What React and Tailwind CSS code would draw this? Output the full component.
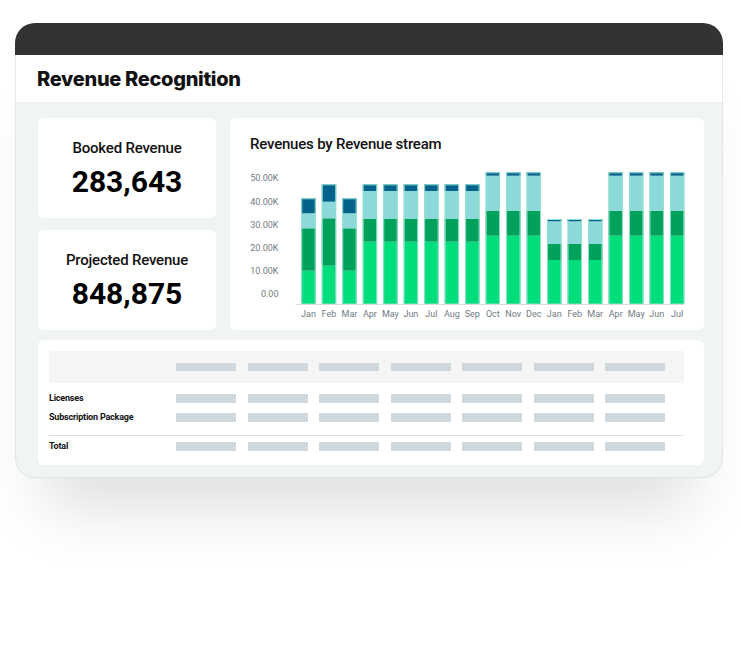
import React from 'react'

const months = ['Jan', 'Feb', 'Mar', 'Apr', 'May', 'Jun', 'Jul', 'Aug', 'Sep', 'Oct', 'Nov', 'Dec', 'Jan', 'Feb', 'Mar', 'Apr', 'May', 'Jun', 'Jul']

// heights from the baseline: bright green, dark green, teal, dark blue
const shapes = {
  a: [33.3, 42.4, 15, 15],
  feb: [38.3, 47.4, 16.6, 17.4],
  mid: [62.3, 22.7, 28, 6.7],
  high: [68.3, 25, 35, 3.4],
  low: [44, 16, 22.7, 2.3],
}
const plan = ['a', 'feb', 'a', 'mid', 'mid', 'mid', 'mid', 'mid', 'mid', 'high', 'high', 'high', 'low', 'low', 'low', 'high', 'high', 'high', 'high']
const colors = ['#00dd7b', '#00a15a', '#8bd9d9', '#05628a']
const yLabels = ['50.00K', '40.00K', '30.00K', '20.00K', '10.00K', '0.00']

const font = { fontFamily: 'Roboto, "Liberation Sans", sans-serif' }

function Chart() {
  const base = 139
  return (
    <svg width="474" height="160" className="block" style={font}>
      {yLabels.map((l, i) => (
        <text key={l} x="48.5" y={14 + i * 23.2} textAnchor="end" dominantBaseline="middle" fontSize="9" fill="#6f7b82">
          {l}
        </text>
      ))}
      {plan.map((k, i) => {
        const x = 71.3 + i * 20.48
        let y = base
        return (
          <g key={i}>
            {shapes[k].map((h, j) => {
              y -= h
              return <rect key={j} x={x} y={y} width="14.4" height={h} fill={colors[j]} />
            })}
            <rect x={x + 0.5} y={y + 0.5} width="13.4" height={base - y - 0.5} fill="none" stroke="#8fe0d0" strokeWidth="1" />
            <text x={x + 7.2} y="150" textAnchor="middle" dominantBaseline="middle" fontSize="9" fill="#6f7b82">
              {months[i]}
            </text>
          </g>
        )
      })}
      <line x1="65.7" y1={base + 0.5} x2="454" y2={base + 0.5} stroke="#d5dde1" strokeWidth="1" />
    </svg>
  )
}

function Stat({ label, value }) {
  return (
    <div className="h-[100px] rounded-[6px] bg-white flex flex-col items-center pt-[21px]" style={font}>
      <div className="text-[15px] font-medium leading-[18px] text-[#111] tracking-[-0.2px]">{label}</div>
      <div className="mt-[8px] text-[30px] font-bold leading-[34px] text-black">{value}</div>
    </div>
  )
}

function Placeholders() {
  return (
    <div className="flex gap-[11.5px]">
      {[0, 1, 2, 3, 4, 5, 6].map((i) => (
        <div key={i} className="w-[60px] h-[8.5px] bg-[#cfd8dc]" />
      ))}
    </div>
  )
}

function Row({ label }) {
  return (
    <div className="flex items-center h-[19px]">
      <div className="w-[127px] text-[9px] font-bold text-[#111] tracking-[-0.2px]" style={font}>{label}</div>
      <Placeholders />
    </div>
  )
}

export default function App() {
  return (
    <div className="w-[740px] h-[669px] bg-white pt-[23px] pl-[15px]">
      <div className="w-[708px] rounded-[20px] shadow-[0_60px_60px_-30px_rgba(0,0,0,0.13)]">
        <div className="h-[32px] bg-[#333333] rounded-t-[20px]" />
        <div className="h-[48px] bg-white border-x border-[#e4e8ea] flex items-center pl-[21px] border-b border-b-[#e9edef]">
          <h1 className="text-[20px] font-extrabold text-[#111] tracking-[-0.3px]" style={{ fontFamily: 'Inter, "Liberation Sans", sans-serif' }}>
            Revenue Recognition
          </h1>
        </div>
        <div className="bg-[#f1f4f5] rounded-b-[20px] border-x border-b border-[#e1e5e7] pt-[15px] pl-[22px] pr-[18px] pb-[12px]">
          <div className="flex gap-[14px]">
            <div className="w-[178px] flex flex-col gap-[12px]">
              <Stat label="Booked Revenue" value="283,643" />
              <Stat label="Projected Revenue" value="848,875" />
            </div>
            <div className="w-[474px] h-[212px] rounded-[6px] bg-white">
              <div className="pl-[20px] pt-[17px] h-[47px] text-[15px] font-medium text-[#111] leading-[18px] tracking-[-0.2px]" style={font}>
                Revenues by Revenue stream
              </div>
              <Chart />
            </div>
          </div>
          <div className="mt-[10px] h-[125px] rounded-[6px] bg-white pl-[11px] pr-[20px] pt-[11px]">
            <div className="h-[32px] bg-[#f5f5f5] flex items-center pl-[127px]">
              <Placeholders />
            </div>
            <div className="pt-[6px]">
              <Row label="Licenses" />
              <Row label="Subscription Package" />
            </div>
            <div className="mt-[8px] border-t border-[#dbe2e5] pt-[1px]">
              <Row label="Total" />
            </div>
          </div>
        </div>
      </div>
    </div>
  )
}
